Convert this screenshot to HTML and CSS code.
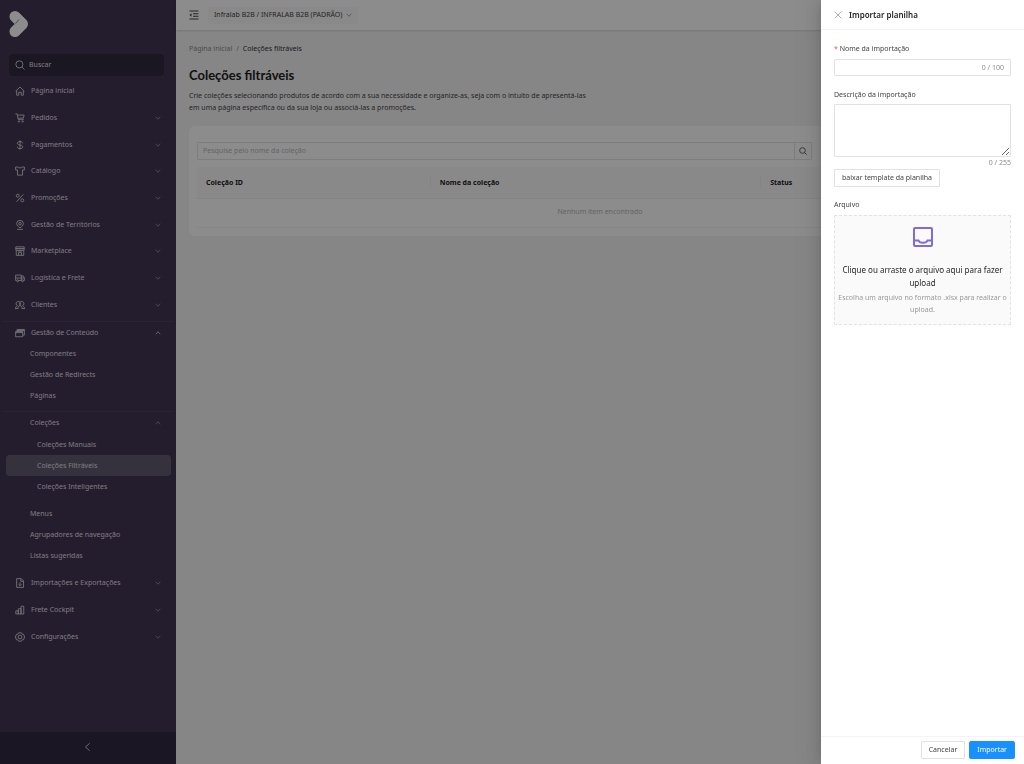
FILE: index.html
```html
<!DOCTYPE html>
<html lang="pt-BR">
<head>
<meta charset="utf-8">
<title>Coleções filtráveis</title>
<link rel="stylesheet" href="styles.css">
</head>
<body>
<svg class="sprite" aria-hidden="true">
  <symbol id="down" viewBox="0 0 24 24"><path d="M3 7l9 10 9-10"/></symbol>
  <symbol id="up" viewBox="0 0 24 24"><path d="M3 17l9-10 9 10"/></symbol>
  <symbol id="search" viewBox="0 0 24 24"><circle cx="10.500" cy="10.500" r="8.500"/><path d="M17 17l6 6"/></symbol>
  <symbol id="home" viewBox="0 0 24 24"><path d="M1.500 12.500L12 2.500l10.500 10M4 11v11h5v-7h6v7h5V11"/></symbol>
  <symbol id="cart" viewBox="0 0 24 24"><path d="M1 2h4l3 14h13M6 5h16l-2 7.500H7.500"/><circle cx="9.500" cy="20.500" r="1.500"/><circle cx="18.500" cy="20.500" r="1.500"/></symbol>
  <symbol id="dollar" viewBox="0 0 24 24"><path d="M12 1v22M18.500 8c0-3-3-4.200-6.500-4.200S5.800 5 5.800 8s3 3.600 6.200 4.200 6.500 1.200 6.500 4.200-3 4.200-6.500 4.200-6.500-1.400-6.500-4.400"/></symbol>
  <symbol id="shirt" viewBox="0 0 24 24"><path d="M8 2.500c1 3 7 3 8 0h6.500V9.500H18V22H6V9.500H1.500V2.500z"/></symbol>
  <symbol id="percent" viewBox="0 0 24 24"><path d="M20 3L4 21"/><circle cx="6.500" cy="6.500" r="3.500"/><circle cx="17.500" cy="17.500" r="3.500"/></symbol>
  <symbol id="pin" viewBox="0 0 24 24"><path d="M12 19c-4-3-8-6-8-10.500a8 7.500 0 0 1 16 0C20 13 16 16 12 19zM5 22.500h14"/><circle cx="12" cy="9" r="3.200"/></symbol>
  <symbol id="shop" viewBox="0 0 24 24"><path d="M2 2h20v8H2zM2 6h20M3 10v12.500h18V10M8.500 22v-6h7v6M7 10c0 4 5 4 5 0 0 4 5 4 5 0"/></symbol>
  <symbol id="truck" viewBox="0 0 24 24"><path d="M4 18H1.500V5H15v13H9M15 7h5l2.500 5v6H21M1.500 12H22"/><circle cx="6.500" cy="18.500" r="2.300"/><circle cx="18" cy="18.500" r="2.300"/></symbol>
  <symbol id="people" viewBox="0 0 24 24"><path d="M6 13.500a5.200 5.200 0 1 1 6-8 5.200 5.200 0 1 1 6 8M12 5.500c-2 3-2 5 0 7.500 2-2.500 2-4.500 0-7.500M1 20.500c.4-4 2.500-6 5-7M23 20.500c-.4-4-2.500-6-5-7M7 20.500c.3-4 2-6 5-7.500 3 1.500 4.700 3.500 5 7.500M0 20.500h8M16 20.500h8"/></symbol>
  <symbol id="windows" viewBox="0 0 24 24"><path d="M1.500 8.500h17v12.500h-17zM1.500 11h17M5 8V3.500h17.500V17H19M5 6h17"/></symbol>
  <symbol id="file" viewBox="0 0 24 24"><path d="M4 1.500h11l5.500 5.500v15.500H4zM14 2v6h6M12 10.500v8M8.500 15l3.500 3.500 3.500-3.500"/></symbol>
  <symbol id="chart" viewBox="0 0 24 24"><path d="M2 14h6v7.500H2zM8 9h6.500v12.500H8zM14.500 3H21v18.500h-6.500z"/></symbol>
  <symbol id="gear" viewBox="0 0 24 24"><path d="M8.500 2h7l2 3.500h3L23 12l-2.500 6.500h-3l-2 3.500h-7l-2-3.500h-3L1 12l2.500-6.500h3z"/><circle cx="12" cy="12" r="4.500"/></symbol>
</svg>

<div class="app">
  <aside class="sidebar">
    <svg class="logo" viewBox="0 0 20 28" role="img" aria-label="Início"><path class="logo-mark" d="M6 6.500L13.500 14 6 21.500"/><path class="logo-slit" d="M6.500 13.500l3.500-4"/></svg>
    <label class="side-search"><svg class="icon"><use href="#search"/></svg><input type="text" placeholder="Buscar" aria-label="Buscar"></label>
    <nav class="nav">
      <div class="group main-group">
        <a class="item" href="#"><svg class="icon"><use href="#home"/></svg>Página inicial</a>
        <a class="item" href="#"><svg class="icon"><use href="#cart"/></svg>Pedidos<svg class="chev"><use href="#down"/></svg></a>
        <a class="item" href="#"><svg class="icon"><use href="#dollar"/></svg>Pagamentos<svg class="chev"><use href="#down"/></svg></a>
        <a class="item" href="#"><svg class="icon"><use href="#shirt"/></svg>Catálogo<svg class="chev"><use href="#down"/></svg></a>
        <a class="item" href="#"><svg class="icon"><use href="#percent"/></svg>Promoções<svg class="chev"><use href="#down"/></svg></a>
        <a class="item" href="#"><svg class="icon"><use href="#pin"/></svg>Gestão de Territórios<svg class="chev"><use href="#down"/></svg></a>
        <a class="item" href="#"><svg class="icon"><use href="#shop"/></svg>Marketplace<svg class="chev"><use href="#down"/></svg></a>
        <a class="item" href="#"><svg class="icon"><use href="#truck"/></svg>Logística e Frete<svg class="chev"><use href="#down"/></svg></a>
        <a class="item" href="#"><svg class="icon"><use href="#people"/></svg>Clientes<svg class="chev"><use href="#down"/></svg></a>
      </div>
      <div class="group open-group">
        <a class="item" href="#"><svg class="icon"><use href="#windows"/></svg>Gestão de Conteúdo<svg class="chev bright"><use href="#up"/></svg></a>
        <a class="sub" href="#">Componentes</a>
        <a class="sub" href="#">Gestão de Redirects</a>
        <a class="sub" href="#">Páginas</a>
        <div class="nested">
          <a class="sub" href="#">Coleções<svg class="chev"><use href="#up"/></svg></a>
          <a class="sub deep" href="#">Coleções Manuais</a>
          <a class="sub deep active" href="#">Coleções Filtráveis</a>
          <a class="sub deep" href="#">Coleções Inteligentes</a>
        </div>
        <a class="sub" href="#">Menus</a>
        <a class="sub" href="#">Agrupadores de navegação</a>
        <a class="sub" href="#">Listas sugeridas</a>
      </div>
      <div class="group last-group">
        <a class="item" href="#"><svg class="icon"><use href="#file"/></svg>Importações e Exportações<svg class="chev"><use href="#down"/></svg></a>
        <a class="item" href="#"><svg class="icon"><use href="#chart"/></svg>Frete Cockpit<svg class="chev"><use href="#down"/></svg></a>
        <a class="item" href="#"><svg class="icon"><use href="#gear"/></svg>Configurações<svg class="chev"><use href="#down"/></svg></a>
      </div>
    </nav>
    <button class="collapse" type="button" aria-label="Recolher menu"><svg class="icon" viewBox="0 0 24 24"><path d="M16 3L6 12l10 9"/></svg></button>
  </aside>

  <div class="page">
    <header class="topbar">
      <button class="fold" type="button" aria-label="Alternar menu"><svg viewBox="0 0 20 20"><path d="M1 2h18M8 7.500h11M8 12.500h11M1 18h18"/><path class="solid" d="M1 10l4-3.500v7z"/></svg></button>
      <button class="store" type="button">Infralab B2B / INFRALAB B2B (PADRÃO)<svg class="chev"><use href="#down"/></svg></button>
    </header>
    <main class="content">
      <nav class="crumbs"><a href="#">Página inicial</a><span>/</span><b>Coleções filtráveis</b></nav>
      <h1>Coleções filtráveis</h1>
      <p class="intro">Crie coleções selecionando produtos de acordo com a sua necessidade e organize-as, seja com o intuito de apresentá-las<br>em uma página específica ou da sua loja ou associá-las a promoções.</p>
      <section class="card">
        <form class="search"><input type="text" placeholder="Pesquise pelo nome da coleção" aria-label="Pesquise pelo nome da coleção"><button type="button" aria-label="Pesquisar"><svg class="icon"><use href="#search"/></svg></button></form>
        <table>
          <thead><tr><th class="c-id">Coleção ID</th><th class="c-name">Nome da coleção</th><th>Status</th></tr></thead>
          <tbody><tr><td colspan="3">Nenhum item encontrado</td></tr></tbody>
        </table>
      </section>
    </main>
  </div>
</div>

<div class="mask"></div>

<section class="drawer" role="dialog" aria-labelledby="drawer-title">
  <header class="drawer-head"><button class="close" type="button" aria-label="Fechar"><svg viewBox="0 0 24 24"><path d="M2 2l20 20M22 2L2 22"/></svg></button><h2 id="drawer-title">Importar planilha</h2></header>
  <form class="drawer-body">
    <label for="name"><i>*</i> Nome da importação</label>
    <div class="field"><input id="name" type="text" maxlength="100"><span>0 / 100</span></div>
    <label for="desc">Descrição da importação</label>
    <textarea id="desc" maxlength="255"></textarea>
    <span class="count">0 / 255</span>
    <button class="btn template" type="button">baixar template da planilha</button>
    <span class="label">Arquivo</span>
    <button class="upload" type="button">
      <svg viewBox="0 0 20 20"><rect x="1" y="1" width="18" height="18" rx="1"/><path d="M1 13.500h4.500c1 3 8 3 9 0H19"/></svg>
      <span class="upload-text">Clique ou arraste o arquivo aqui para fazer upload</span>
      <span class="upload-hint">Escolha um arquivo no formato .xlsx para realizar o upload.</span>
    </button>
  </form>
  <footer class="drawer-foot"><button class="btn" type="button">Cancelar</button><button class="btn primary" type="button">Importar</button></footer>
</section>
</body>
</html>
```

FILE: styles.css
```css
* { box-sizing: border-box; }
body {
  margin: 0;
  font: 7px/12px "Noto Sans", "Open Sans", sans-serif;
  color: #444;
  background: #f4f4f5;
}
a { color: inherit; text-decoration: none; }
button, input, textarea { font: inherit; color: inherit; margin: 0; padding: 0; border: 0; background: none; outline: 0; }
svg { display: block; flex: none; fill: none; stroke: currentColor; stroke-width: 2; }
.sprite { position: absolute; width: 0; height: 0; }
.icon { width: 10px; height: 10px; }
.chev { width: 6px; height: 6px; margin-left: auto; stroke-width: 3; opacity: .6; }
.chev.bright { opacity: 1; }

.app { display: flex; min-height: 100vh; }
.sidebar { width: 176px; flex: none; display: flex; flex-direction: column; background: #413554; color: #e2dfe6; }
.logo { width: 20px; height: 28px; margin: 10px 0 16px 9px; }
.logo-mark { stroke: #fff; stroke-width: 11; stroke-linecap: round; stroke-linejoin: round; }
.logo-slit { stroke: #8d8699; stroke-width: 1; }
.side-search { display: flex; align-items: center; gap: 4px; height: 22px; margin: 0 12px 2px 9px; padding: 0 6px; border-radius: 4px; background: #312a3e; }
.side-search input { flex: 1; min-width: 0; }
.side-search input::placeholder { color: #e2dfe6; opacity: 1; }
.nav { flex: 1; }
.group { display: flex; flex-direction: column; }
.item { display: flex; flex: 1; align-items: center; gap: 6px; padding: 0 15px; }
.main-group { min-height: 240px; }
.open-group { margin: 3px 0 4px; }
.open-group > .item { min-height: 22px; margin: 0 2px; padding: 0 13px; border-top: 1px solid #4c4161; }
.sub { display: flex; align-items: center; min-height: 21px; margin: 0 5px 0 6px; padding: 0 10px 0 24px; border-radius: 4px; }
.sub.deep { padding-left: 31px; }
.sub.active { background: #635c70; }
.nested { margin: 5px 0 6px; }
.nested > .sub:first-child { min-height: 23px; margin: 0 4px; padding: 0 11px 0 26px; border-top: 1px solid #4c4161; border-radius: 0; }
.last-group { min-height: 80px; }
.collapse { display: flex; align-items: center; justify-content: center; height: 32px; padding-bottom: 3px; background: #312840; }

.page { flex: 1; min-width: 0; }
.topbar { display: flex; align-items: center; gap: 9px; height: 30px; padding: 0 13px; background: #fff; box-shadow: 0 1px 2px #0000001f; }
.fold svg { width: 10px; height: 10px; }
.solid { fill: currentColor; stroke: none; }
.store { display: flex; align-items: center; gap: 4px; height: 17px; padding: 0 6px; border-radius: 2px; background: #fafafa; }
.content { padding: 13px; }
.crumbs { display: flex; gap: 4px; color: #8c8c8c; }
.crumbs b { color: #333; font-weight: 400; }
h1 { margin: 12px 0 7px; font: 700 13px/16px Lato, sans-serif; color: #222; }
.intro { margin: 0 0 12px; }
.card { padding: 16px 8px 8px; border-radius: 6px; background: #fff; }
.search { display: flex; max-width: 615px; height: 18px; margin-bottom: 7px; border: 1px solid #e4e4e4; border-radius: 1px; }
.search input { flex: 1; min-width: 0; padding: 0 5px; }
.search input::placeholder { color: #b8b8b8; opacity: 1; }
.search button { display: flex; align-items: center; justify-content: center; width: 17px; border-left: 1px solid #e4e4e4; color: #666; }
.search .icon { width: 8px; height: 8px; stroke-width: 3; }
table { width: 100%; border-collapse: collapse; table-layout: fixed; }
th { height: 31px; padding: 1px 9px 0; text-align: left; font-weight: 700; color: #222; border-bottom: 1px solid #f0f0f0; background: linear-gradient(#f0f0f0, #f0f0f0) 100% 50% / 1px 12px no-repeat #fafafa; }
th:last-child { background: #fafafa; }
.c-id { width: 29%; }
.c-name { width: 41%; }
td { height: 29px; padding: 0 0 1px; text-align: center; color: #b8b8b8; border-bottom: 1px solid #f4f4f4; }

.mask { position: fixed; inset: 0; background: rgb(0 0 0 / 45%); }

.drawer { position: fixed; top: 0; right: 0; bottom: 0; width: 203px; display: flex; flex-direction: column; background: #fff; box-shadow: -3px 0 8px -4px #0000001f, -5px 0 15px #00000014, -6px 0 24px 8px #0000000d; }
.drawer-head { display: flex; align-items: center; gap: 7px; height: 30px; padding: 0 13px; border-bottom: 1px solid #f4f4f4; }
.close { color: #888; }
.close svg { width: 8px; height: 8px; }
h2 { margin: 0; font-size: 8px; line-height: 12px; font-weight: 600; color: #262626; }
.drawer-body { flex: 1; display: flex; flex-direction: column; padding: 13px; }
.drawer-body label { margin-bottom: 4px; }
.drawer-body i { color: #ff4d4f; font-style: normal; }
.field { display: flex; align-items: center; height: 17px; margin-bottom: 13px; padding: 0 6px; border: 1px solid #e2e2e2; border-radius: 1px; color: #8c8c8c; }
.field input { flex: 1; min-width: 0; }
.field + label { margin-bottom: 3px; }
textarea { height: 53px; border: 1px solid #e2e2e2; border-radius: 1px; resize: vertical; }
.count { align-self: flex-end; color: #8c8c8c; }
.btn { height: 18px; padding: 0 7px; border: 1px solid #e2e2e2; border-radius: 1px; background: #fff; }
.template { align-self: flex-start; }
.label { margin: 12px 0 4px; }
.upload { display: flex; flex-direction: column; align-items: center; padding: 11px 3px 8px; border: 1px dashed #e2e2e2; border-radius: 1px; background: #fafafa; }
.upload svg { width: 20px; height: 20px; margin-bottom: 16px; color: #7d6be0; stroke-width: 2; }
.upload-text { padding: 0 3px; margin-bottom: 3px; font-size: 8px; line-height: 13px; color: #262626; }
.upload-hint { color: #9a9a9a; }
.drawer-foot { display: flex; justify-content: flex-end; gap: 4px; padding: 4px 9px 5px; border-top: 1px solid #f4f4f4; }
.primary { border-color: #1890ff; border-radius: 2px; background: #1890ff; color: #fff; }
```
